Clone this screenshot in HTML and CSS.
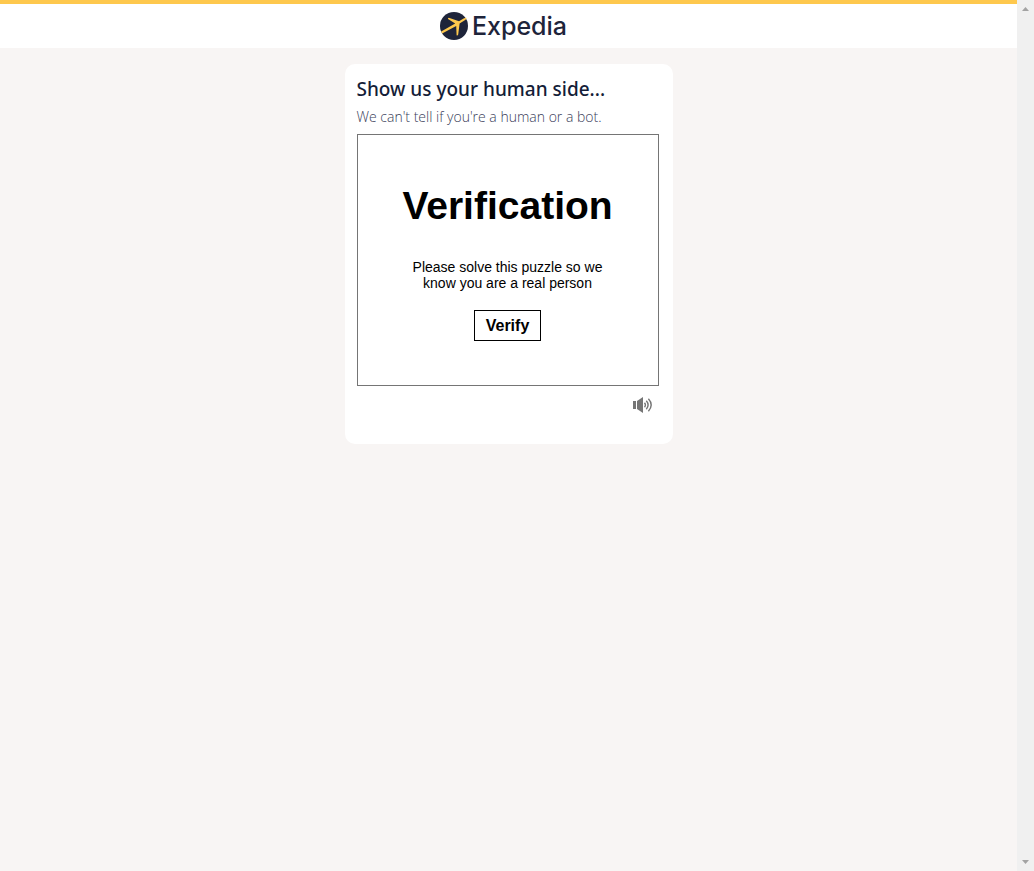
FILE: index.html
```html
<!DOCTYPE html>
<html lang="en">
<head>
<meta charset="utf-8">
<title>Expedia</title>
<link rel="stylesheet" href="styles.css">
</head>
<body>
<div class="page">
  <header class="header">
    <a class="brand" href="#">
      <svg class="brand-mark" viewBox="0 0 28 28" aria-hidden="true">
        <circle cx="14" cy="14" r="14" fill="#1e243a"/>
        <path d="M1.2 19.5 15.2 11.5 8 6.9Q7.6 6.1 8.8 5.8L19 9.3 23.6 6.4Q26.4 5.2 26.6 6 26.6 7 24.4 8.5L19.6 11.6 18.2 22.6Q17.6 24 16.6 23.3L16.2 13.9 2.1 21.6Z" fill="#fec84d"/>
      </svg>
      <span class="brand-name">Expedia</span>
    </a>
  </header>
  <main class="main">
    <section class="card">
      <h1 class="card-title">Show us your human side...</h1>
      <p class="card-text">We can't tell if you're a human or a bot.</p>
      <div class="challenge">
        <h2 class="challenge-title">Verification</h2>
        <p class="challenge-text">Please solve this puzzle so we know you are a real person</p>
        <button class="verify" type="button">Verify</button>
      </div>
      <div class="tools">
        <button class="audio" type="button" aria-label="Audio challenge">
          <svg class="audio-icon" viewBox="0 0 20 16" aria-hidden="true">
            <path d="M0 4h3v8H0zM4 4 10 0v16L4 12z" fill="#757575"/>
            <path d="M11.5 5.8q1.8 2.2 0 4.4M13.3 3.8q3.6 4.2 0 8.4M15.4 1.8q5.6 6.2 0 12.4" fill="none" stroke="#757575" stroke-width="1.4"/>
          </svg>
        </button>
      </div>
    </section>
  </main>
</div>
<div class="scrollbar" aria-hidden="true">
  <svg class="arrow" viewBox="0 0 7 4"><path d="M0 4 3.5 0 7 4z" fill="#a3a3a3"/></svg>
  <svg class="arrow" viewBox="0 0 7 4"><path d="M0 0 3.5 4 7 0z" fill="#a3a3a3"/></svg>
</div>
</body>
</html>
```
FILE: styles.css
```css
* {
  box-sizing: border-box;
}

body {
  margin: 0;
  min-height: 100vh;
  display: flex;
  background: #f8f5f4;
  font-family: "Noto Sans", "Open Sans", sans-serif;
}

h1, h2, p {
  margin: 0;
}

button {
  background: none;
  border: 0;
  padding: 0;
  cursor: pointer;
}

.page {
  flex: 1;
}

.header {
  display: flex;
  justify-content: center;
  padding: 8px 10px 8px 0;
  border-top: 4px solid #fec84d;
  background: #fff;
}

.brand {
  display: flex;
  gap: 4px;
  color: #1e243a;
  text-decoration: none;
}

.brand-mark {
  width: 28px;
  height: 28px;
}

.brand-name {
  font: 500 25px/28px Inter, sans-serif;
}

.main {
  display: flex;
  justify-content: center;
  padding: 16px;
}

.card {
  width: 328px;
  padding: 12px 14px 20px 12px;
  border-radius: 10px;
  background: #fff;
}

.card-title {
  color: #141d38;
  font-size: 19px;
  font-weight: 500;
  line-height: 26px;
}

.card-text {
  margin: 5px 0 7px;
  color: #3a405a;
  font-family: "Open Sans", "Noto Sans", sans-serif;
  font-size: 14px;
  font-weight: 300;
  line-height: 20px;
}

.challenge {
  display: flex;
  flex-direction: column;
  align-items: center;
  padding: 48px 40px 44px;
  border: 1px solid #757575;
  color: #000;
  font-family: "Liberation Sans", Arial, sans-serif;
  text-align: center;
}

.challenge-title {
  font-size: 39px;
  line-height: 46px;
}

.challenge-text {
  margin: 30px 0 19px;
  padding: 0 8px;
  font-size: 14px;
  line-height: 16px;
}

.verify {
  padding: 5px 11px;
  border: 1px solid #000;
  color: #000;
  font: bold 16px/19px "Liberation Sans", Arial, sans-serif;
}

.tools {
  display: flex;
  justify-content: flex-end;
  padding: 11px 6px;
}

.audio,
.audio-icon {
  display: block;
  width: 20px;
  height: 16px;
}

.scrollbar {
  display: flex;
  flex-direction: column;
  justify-content: space-between;
  align-items: center;
  width: 17px;
  padding: 7px 0;
  background: #f0f0f0;
}

.arrow {
  width: 7px;
  height: 4px;
}
```
